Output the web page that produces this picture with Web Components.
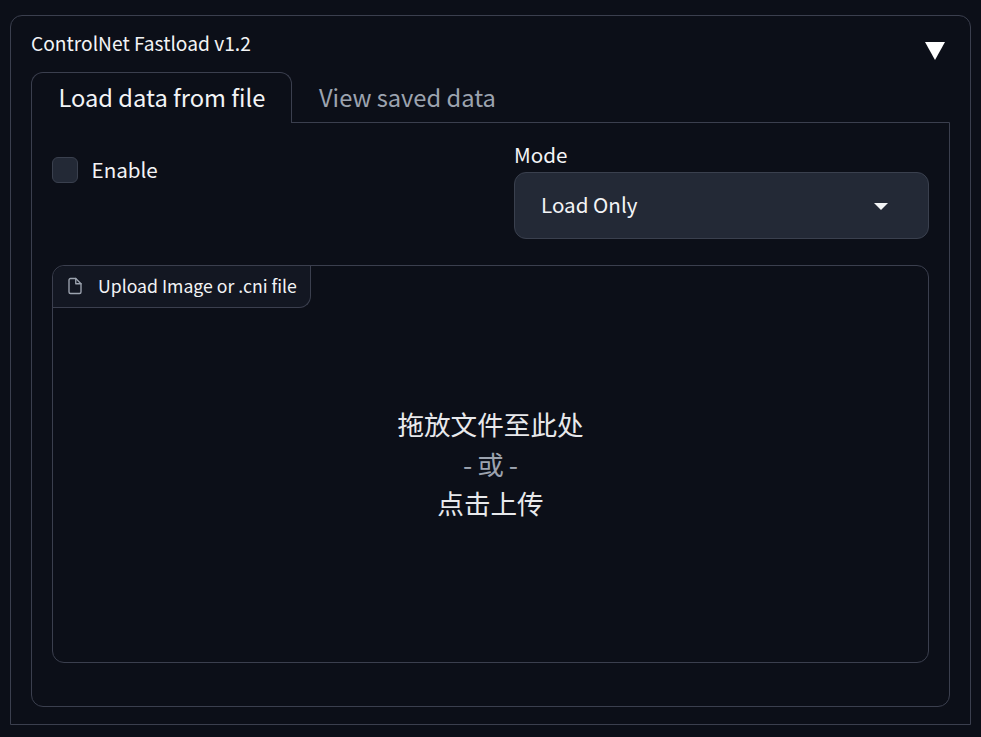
<!DOCTYPE html>
<html>
<head>
<meta charset="utf-8">
<title>ControlNet Fastload</title>
<style>
  html, body { margin: 0; background: #0c0f18; }
  body {
    padding: 15px 10px 12px;
    color: #f3f4f6;
    font-family: "Noto Sans CJK SC", "Noto Sans", sans-serif;
  }
</style>
</head>
<body>
<fastload-accordion label="ControlNet Fastload v1.2">
  <fastload-tabs first="Load data from file" second="View saved data">
    <div style="display:grid;grid-template-columns:1fr 415px;column-gap:21px">
      <fastload-checkbox>Enable</fastload-checkbox>
      <fastload-select label="Mode" value="Load Only"></fastload-select>
    </div>
    <fastload-upload tab="Upload Image or .cni file">
      <span>拖放文件至此处</span>
      <em>- 或 -</em>
      <span>点击上传</span>
    </fastload-upload>
  </fastload-tabs>
</fastload-accordion>

<script>
  const line = "#3b3f4e";

  class FastloadAccordion extends HTMLElement {
    constructor() {
      super();
      this.attachShadow({mode: "open"});
      this.shadowRoot.innerHTML = `
        <style>
          :host { display: block; box-sizing: border-box; height: 710px; padding: 12px 25px 16px 20px;
                  border: 1px solid ${line}; border-radius: 12px 12px 0 0; }
          .head { display: flex; justify-content: space-between; height: 44px; }
          .title { font-size: 19.2px; line-height: 30px; }
          svg { margin-top: 14px; }
          ::slotted(fastload-tabs) { margin-right: -5px; }
        </style>
        <div class="head">
          <span class="title">${this.getAttribute("label")}</span>
          <svg width="20" height="18" viewBox="0 0 20 18"><path d="M0 0H20L10 18Z" fill="#fff"/></svg>
        </div>
        <slot></slot>`;
    }
  }
  customElements.define("fastload-accordion", FastloadAccordion);

  class FastloadTabs extends HTMLElement {
    constructor() {
      super();
      this.attachShadow({mode: "open"});
      this.shadowRoot.innerHTML = `
        <style>
          :host { display: block; }
          .nav { display: flex; height: 51px; font-size: 23.7px; }
          .tab { box-sizing: border-box; height: 51px; line-height: 50px; padding: 0 20px 0 26.5px; white-space: nowrap; }
          .on { width: 261px; line-height: 48px; border: 1px solid ${line}; border-bottom: 0; border-radius: 12px 12px 0 0;
                background: #0c0f18; position: relative; z-index: 1; }
          .off { color: #9ca3af; padding-left: 27px; }
          .panel { box-sizing: border-box; height: 585px; margin-top: -1px; padding: 21px 20px 0;
                   border: 1px solid ${line}; border-radius: 0 0 12px 12px; }
        </style>
        <div class="nav">
          <div class="tab on">${this.getAttribute("first")}</div>
          <div class="tab off">${this.getAttribute("second")}</div>
        </div>
        <div class="panel"><slot></slot></div>`;
    }
  }
  customElements.define("fastload-tabs", FastloadTabs);

  class FastloadCheckbox extends HTMLElement {
    constructor() {
      super();
      this.attachShadow({mode: "open"});
      this.shadowRoot.innerHTML = `
        <style>
          :host { display: flex; align-items: flex-start; gap: 13.5px; font-size: 20.6px; }
          .box { box-sizing: border-box; width: 26px; height: 26px; margin-top: 13px;
                 background: #232936; border: 1px solid #3a404e; border-radius: 6px; }
          .text { line-height: 30px; margin-top: 10px; }
        </style>
        <span class="box"></span><span class="text"><slot></slot></span>`;
    }
  }
  customElements.define("fastload-checkbox", FastloadCheckbox);

  class FastloadSelect extends HTMLElement {
    constructor() {
      super();
      this.attachShadow({mode: "open"});
      this.shadowRoot.innerHTML = `
        <style>
          :host { display: block; font-size: 20.6px; }
          .label { line-height: 20px; height: 28px; }
          .field { box-sizing: border-box; height: 67px; display: flex; align-items: center;
                   justify-content: space-between; padding: 0 40px 4px 26px;
                   background: #232936; border: 1px solid #3a404e; border-radius: 12px; }
          svg { margin-top: 5px; }
        </style>
        <div class="label">${this.getAttribute("label")}</div>
        <div class="field">
          <span>${this.getAttribute("value")}</span>
          <svg width="14" height="7" viewBox="0 0 14 7"><path d="M0 0H14L7 7Z" fill="#f3f4f6"/></svg>
        </div>`;
    }
  }
  customElements.define("fastload-select", FastloadSelect);

  class FastloadUpload extends HTMLElement {
    constructor() {
      super();
      this.attachShadow({mode: "open"});
      this.shadowRoot.innerHTML = `
        <style>
          :host { display: block; box-sizing: border-box; height: 398px; margin-top: 26px; position: relative;
                  border: 1px solid ${line}; border-radius: 12px; }
          .tag { position: absolute; left: 0; top: 0; box-sizing: border-box; height: 42px; width: 258px;
                 display: flex; align-items: center; gap: 14px; padding: 0 0 2px 13px; font-size: 17.65px;
                 background: #131722; border-right: 1px solid ${line}; border-bottom: 1px solid ${line};
                 border-radius: 12px 0 12px 0; }
          .drop { box-sizing: border-box; height: 100%; padding-bottom: 1px; display: flex; flex-direction: column;
                  align-items: center; justify-content: center; font-size: 26.6px; line-height: 39.5px; color: #e8e9ec; }
          ::slotted(em) { font-style: normal; color: #9ca3af; word-spacing: -1px; }
        </style>
        <div class="tag">
          <svg width="18" height="18" viewBox="0 0 24 24" fill="none" stroke="#9ca3af" stroke-width="1.8" stroke-linecap="round" stroke-linejoin="round">
            <path d="M13 2H6a2 2 0 0 0-2 2v16a2 2 0 0 0 2 2h12a2 2 0 0 0 2-2V9z"/><path d="M13 2v7h7"/>
          </svg>
          <span>${this.getAttribute("tab")}</span>
        </div>
        <div class="drop"><slot></slot></div>`;
    }
  }
  customElements.define("fastload-upload", FastloadUpload);
</script>
</body>
</html>
